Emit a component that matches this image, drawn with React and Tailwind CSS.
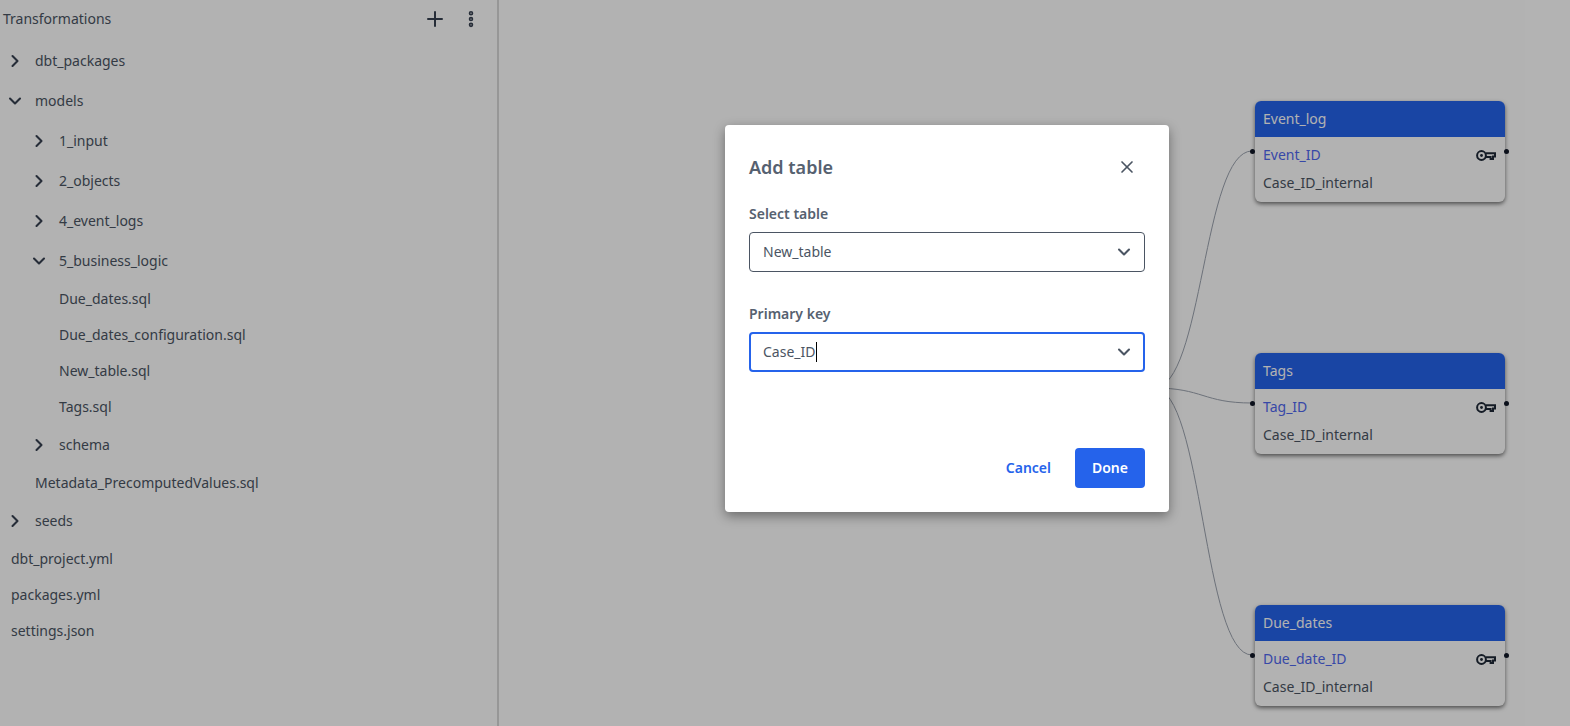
import { ChevronDown, ChevronRight, MoreVertical, Plus, X } from 'lucide-react';

const TREE = [
  { name: 'dbt_packages', depth: 0, folder: 'closed' },
  { name: 'models', depth: 0, folder: 'open' },
  { name: '1_input', depth: 1, folder: 'closed' },
  { name: '2_objects', depth: 1, folder: 'closed' },
  { name: '4_event_logs', depth: 1, folder: 'closed' },
  { name: '5_business_logic', depth: 1, folder: 'open' },
  { name: 'Due_dates.sql', depth: 2 },
  { name: 'Due_dates_configuration.sql', depth: 2 },
  { name: 'New_table.sql', depth: 2 },
  { name: 'Tags.sql', depth: 2 },
  { name: 'schema', depth: 1, folder: 'closed' },
  { name: 'Metadata_PrecomputedValues.sql', depth: 1 },
  { name: 'seeds', depth: 0, folder: 'closed' },
  { name: 'dbt_project.yml', depth: 0 },
  { name: 'packages.yml', depth: 0 },
  { name: 'settings.json', depth: 0 },
];

const DEPTH_PADDING = {
  0: 'pl-[11px]',
  1: 'pl-[35px]',
  2: 'pl-[59px]',
};

const NODES = [
  { title: 'Event_log', keyName: 'Event_ID', pos: 'top-[101px]' },
  { title: 'Tags', keyName: 'Tag_ID', pos: 'top-[353px]' },
  { title: 'Due_dates', keyName: 'Due_date_ID', pos: 'top-[605px]' },
];

function KeyIcon() {
  return (
    <svg width="20" height="11" viewBox="0 0 20 11" fill="none" stroke="currentColor" strokeWidth="2" className="text-[#1f2937]">
      <circle cx="5.5" cy="5.5" r="4.4" />
      <circle cx="5.5" cy="5.5" r="1.4" fill="currentColor" stroke="none" />
      <path d="M10 3.2 H19 V6.6 H17 V9 H14.6 V7 H10" />
    </svg>
  );
}

function TreeRow({ item }) {
  if (!item.folder) {
    return (
      <div className={`flex h-9 items-center text-sm text-[#4b5563] ${DEPTH_PADDING[item.depth]}`}>
        {item.name}
      </div>
    );
  }
  const Icon = item.folder === 'open' ? ChevronDown : ChevronRight;
  const padding = item.depth === 0 ? 'pl-[5px]' : 'pl-[29px]';
  return (
    <div className={`flex h-10 items-center gap-2 text-sm text-[#4b5563] ${padding}`}>
      <Icon size={20} strokeWidth={2.5} className="text-[#374151]" />
      <span className="ml-[2px]">{item.name}</span>
    </div>
  );
}

function TableNode({ node }) {
  return (
    <div className={`absolute left-[1255px] w-[250px] ${node.pos}`}>
      <div className="overflow-hidden rounded-md bg-white pb-[5px] shadow-[0_2px_4px_rgba(0,0,0,0.55)]">
        <div className="flex h-9 items-center bg-[#2563eb] px-[8px] text-sm text-white">{node.title}</div>
        <div className="mt-1 flex h-7 items-center justify-between pl-[8px] pr-[9px] text-sm text-[#5068f0]">
          {node.keyName}
          <KeyIcon />
        </div>
        <div className="flex h-7 items-center px-[8px] text-sm text-[#4b5563]">Case_ID_internal</div>
      </div>
      <span className="absolute -left-[5px] top-[48px] h-[5px] w-[5px] rounded-full bg-[#111827]" />
      <span className="absolute -right-[4px] top-[48px] h-[5px] w-[5px] rounded-full bg-[#111827]" />
    </div>
  );
}

function SelectField({ label, value, focused }) {
  return (
    <div>
      <div className="mb-2 h-5 text-sm font-semibold leading-5 text-[#566170]">{label}</div>
      <div
        className={`flex h-10 items-center justify-between rounded text-sm text-[#4b5563] ${
          focused ? 'border-2 border-[#2563eb] pl-[12px] pr-[9px]' : 'border border-[#4b5563] pl-[13px] pr-[10px]'
        }`}
      >
        <span className="flex items-center">
          {value}
          {focused && <span className="h-5 w-px bg-black" />}
        </span>
        <ChevronDown size={20} strokeWidth={2.5} className="text-[#4b5563]" />
      </div>
    </div>
  );
}

export default function App() {
  return (
    <div className="relative h-[726px] w-[1570px] overflow-hidden bg-white font-['Noto_Sans',sans-serif]">
      {/* Tree panel */}
      <aside className="h-full w-[499px] border-r-2 border-[#d9d9d9]">
        <div className="flex h-[41px] items-center justify-between pb-[4px] pl-[3px] pr-[16px] text-sm text-[#4b5563]">
          <span>Transformations</span>
          <div className="flex items-center gap-[14px] text-[#374151]">
            <Plus size={24} strokeWidth={2} />
            <MoreVertical size={20} strokeWidth={3.5} />
          </div>
        </div>
        {TREE.map((item) => (
          <TreeRow key={item.name} item={item} />
        ))}
      </aside>

      {/* Canvas */}
      <svg className="absolute left-0 top-0 h-[726px] w-[1570px]" viewBox="0 0 1570 726" fill="none">
        <path d="M1154 388 C1203 388 1203 151 1252 151" stroke="#9ca3af" />
        <path d="M1154 388 C1203 388 1203 403 1252 403" stroke="#9ca3af" />
        <path d="M1154 388 C1203 388 1203 655 1252 655" stroke="#9ca3af" />
      </svg>
      {NODES.map((node) => (
        <TableNode key={node.title} node={node} />
      ))}

      {/* Modal */}
      <div className="absolute inset-0 bg-black/30" />
      <div className="absolute left-[725px] top-[125px] flex h-[387px] w-[444px] flex-col rounded bg-white px-6 shadow-[0_4px_12px_rgba(0,0,0,0.4)]">
        <div className="flex h-[79px] items-center justify-between pr-[8px] pt-[4px]">
          <h2 className="text-lg font-semibold text-[#566170]">Add table</h2>
          <X size={20} className="text-[#4b5563]" />
        </div>
        <div className="flex flex-col gap-8">
          <SelectField label="Select table" value="New_table" />
          <SelectField label="Primary key" value="Case_ID" focused />
        </div>
        <div className="mt-auto flex items-center justify-end gap-6 pb-6">
          <button className="text-sm font-semibold text-[#2563eb]">Cancel</button>
          <button className="h-10 w-[70px] rounded bg-[#2563eb] text-sm font-semibold text-white">Done</button>
        </div>
      </div>
    </div>
  );
}
